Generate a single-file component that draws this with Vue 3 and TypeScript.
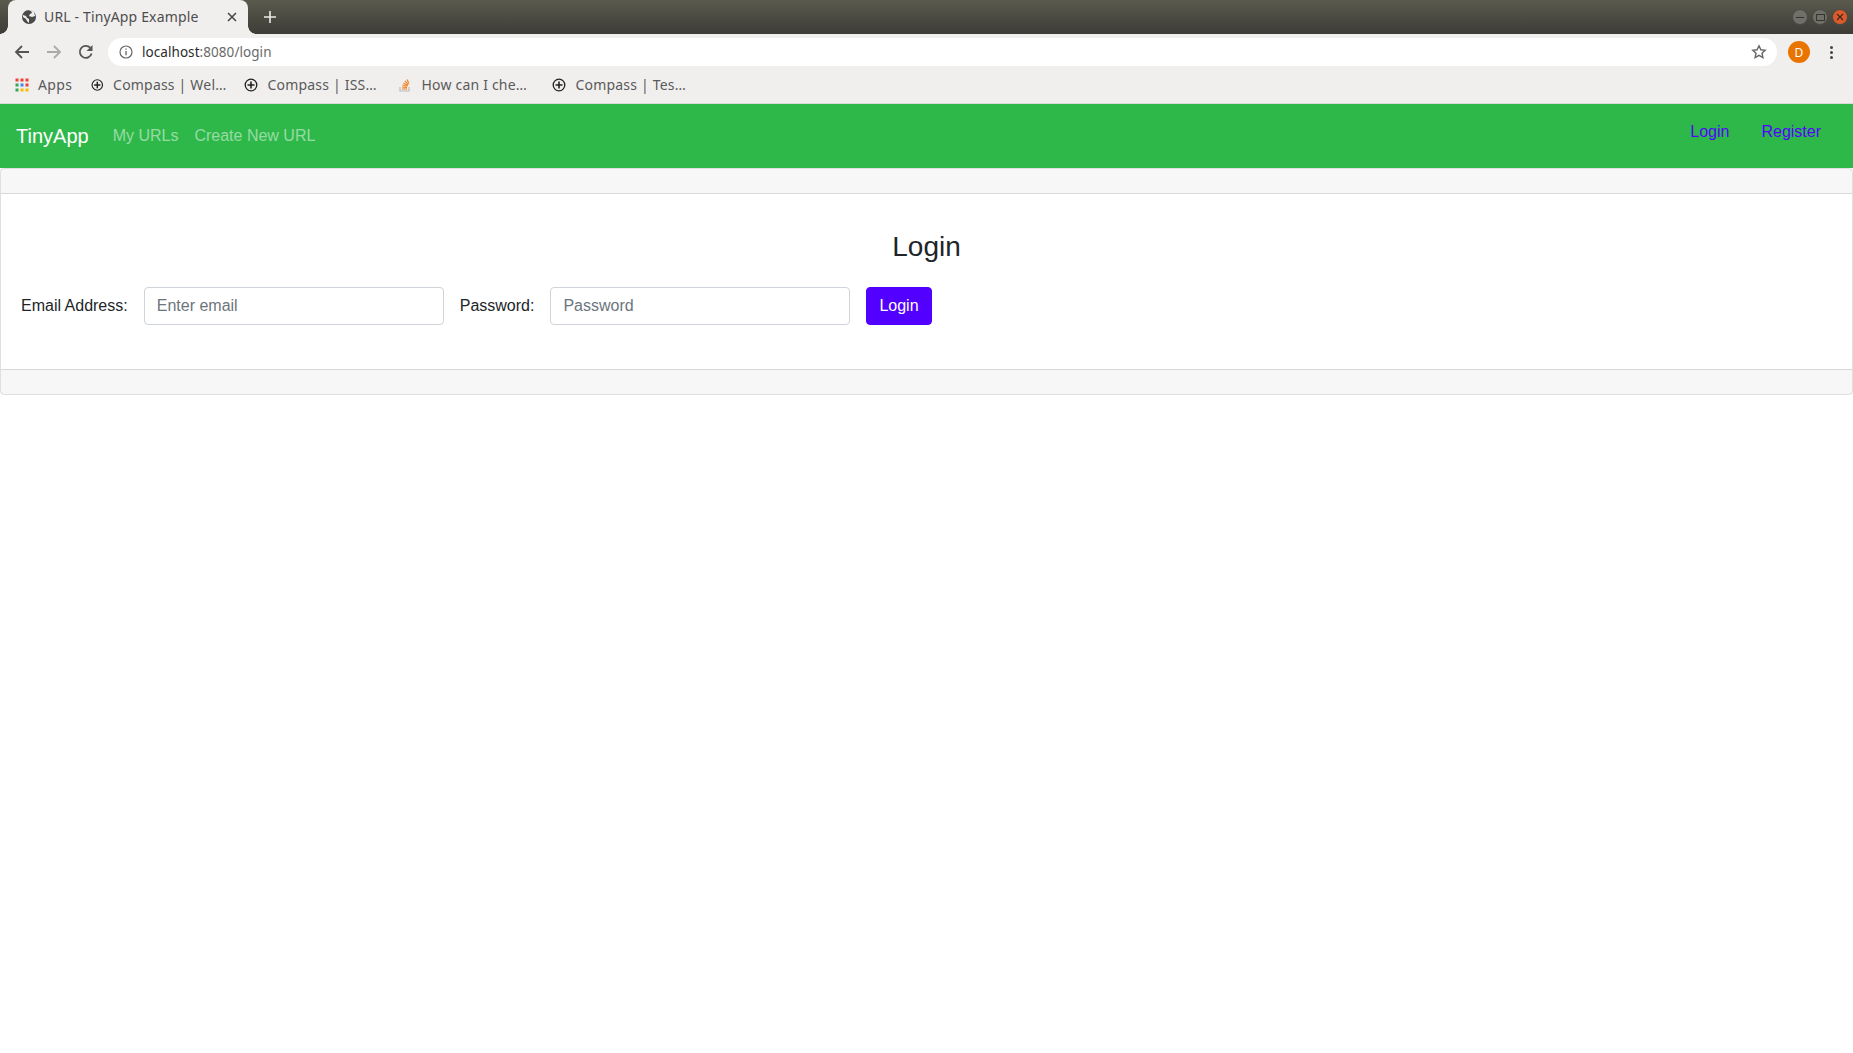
<template>
  <div class="page">
    <!-- browser chrome -->
    <div class="titlebar">
      <div class="tab">
        <svg class="favicon" viewBox="0 0 16 16" width="16" height="16">
          <circle cx="8" cy="8" r="7" fill="#4a4a4a" />
          <path d="M2 6l3 1 1 2 2 1v4l-2-2-1-2-3-2zM7 1.500l3 .5 1 2-2 1-1 2 3 1 3-1-1-4-3-2z" fill="#f1efee" />
        </svg>
        <span class="tab-title">URL - TinyApp Example</span>
        <svg class="tab-close" viewBox="0 0 10 10" width="10" height="10">
          <path d="M1 1l8 8M9 1l-8 8" stroke="#4a4a4a" stroke-width="1.600" />
        </svg>
      </div>
      <svg class="new-tab" viewBox="0 0 12 12" width="12" height="12">
        <path d="M6 0v12M0 6h12" stroke="#ecebe8" stroke-width="1.600" />
      </svg>
      <div class="window-buttons">
        <span class="win-btn"><i class="min"></i></span>
        <span class="win-btn"><i class="max"></i></span>
        <span class="win-btn close">
          <svg viewBox="0 0 8 8" width="8" height="8"><path d="M1 1l6 6M7 1l-6 6" stroke="#3a2a20" stroke-width="1.200" /></svg>
        </span>
      </div>
    </div>

    <div class="toolbar">
      <svg class="tool" viewBox="0 0 16 16" width="16" height="16">
        <path d="M15 8H2M8 2L2 8l6 6" fill="none" stroke="#555" stroke-width="1.800" />
      </svg>
      <svg class="tool" viewBox="0 0 16 16" width="16" height="16">
        <path d="M1 8h13M8 2l6 6-6 6" fill="none" stroke="#aaa" stroke-width="1.800" />
      </svg>
      <svg class="tool" viewBox="0 0 16 16" width="16" height="16">
        <path d="M13.600 9.500A6 6 0 1 1 12.200 3.700" fill="none" stroke="#555" stroke-width="1.800" />
        <path d="M14.500 1v6h-6z" fill="#555" />
      </svg>
      <div class="omnibox">
        <svg viewBox="0 0 14 14" width="14" height="14">
          <circle cx="7" cy="7" r="6" fill="none" stroke="#666" stroke-width="1.200" />
          <path d="M7 6v4.200M7 3.400v1.400" stroke="#666" stroke-width="1.300" />
        </svg>
        <span class="url"><b>localhost</b>:8080/login</span>
        <svg class="star" viewBox="0 0 16 16" width="16" height="16">
          <path d="M8 1.800l1.900 4 4.300.5-3.200 3 .9 4.300L8 11.400l-3.900 2.200.9-4.300-3.200-3 4.300-.5z" fill="none" stroke="#666" stroke-width="1.400" />
        </svg>
      </div>
      <span class="avatar">D</span>
      <span class="dots"><i></i><i></i><i></i></span>
    </div>

    <div class="bookmarks">
      <div class="bookmark apps">
        <svg viewBox="0 0 14 14" width="14" height="14">
          <rect v-for="cell in appCells" :key="cell.x + '-' + cell.y" :x="cell.x" :y="cell.y" width="3" height="3" :fill="cell.color" />
        </svg>
        <span>Apps</span>
      </div>
      <div v-for="item in bookmarks" :key="item.label" class="bookmark" :style="{ width: item.width + 'px' }">
        <svg v-if="item.kind === 'globe'" viewBox="0 0 14 14" width="14" height="14">
          <circle cx="7" cy="7" r="5.800" fill="none" stroke="#222" stroke-width="1.300" />
          <path d="M7 3.500v7M3.500 7h7" stroke="#222" stroke-width="1.600" />
        </svg>
        <svg v-else viewBox="0 0 14 14" width="14" height="14">
          <path d="M2 9v4h9V9" fill="none" stroke="#bcbbb8" stroke-width="1.200" />
          <path d="M4 11h5M4 9l5 .6M4.400 7l5 1.200M5.400 5l4.400 2.400M7 3l3.400 3.600M9 1.500l2 4" stroke="#f48024" stroke-width="1.100" />
        </svg>
        <span>{{ item.label }}</span>
      </div>
    </div>

    <!-- page content -->
    <nav class="navbar">
      <a class="brand">TinyApp</a>
      <a class="nav-link">My URLs</a>
      <a class="nav-link">Create New URL</a>
      <div class="nav-right">
        <a class="auth-link">Login</a>
        <a class="auth-link">Register</a>
      </div>
    </nav>

    <div class="card">
      <div class="card-header"></div>
      <div class="card-body">
        <h3>Login</h3>
        <form class="login-form" @submit.prevent>
          <label for="email">Email Address:</label>
          <input id="email" type="email" placeholder="Enter email" />
          <label for="password">Password:</label>
          <input id="password" type="password" placeholder="Password" />
          <button type="submit">Login</button>
        </form>
      </div>
      <div class="card-footer"></div>
    </div>
  </div>
</template>

<script setup lang="ts">
const appColors = ['#ea4335', '#ea4335', '#ea4335', '#34a853', '#4285f4', '#ea4335', '#34a853', '#fbbc05', '#fbbc05']

const appCells = appColors.map((color, i) => ({
  x: (i % 3) * 5 + 0.5,
  y: Math.floor(i / 3) * 5 + 0.5,
  color,
}))

const bookmarks = [
  { label: 'Compass | Wel…', kind: 'globe', width: 135 },
  { label: 'Compass | ISS…', kind: 'globe', width: 136 },
  { label: 'How can I che…', kind: 'stack', width: 136 },
  { label: 'Compass | Tes…', kind: 'globe', width: 135 },
]
</script>

<style>
html,
body {
  margin: 0;
  background: #fff;
}
</style>

<style scoped>
.page {
  min-height: 1053px;
  font-family: "Liberation Sans", Arial, sans-serif;
  font-size: 16px;
  color: #212529;
  overflow: hidden;
}

.titlebar {
  height: 34px;
  display: flex;
  align-items: flex-end;
  padding-left: 8px;
  background: linear-gradient(#5a5a4e, #3d3c36);
}

.tab {
  position: relative;
  width: 240px;
  height: 34px;
  box-sizing: border-box;
  padding: 0 11px 1px 13px;
  display: flex;
  align-items: center;
  background: #f1efee;
  border-radius: 8px 8px 0 0;
  font-family: "Noto Sans", sans-serif;
  font-size: 14px;
  letter-spacing: 0.15px;
  color: #4d4d4d;
}

/* outward curves at the foot of the active tab */
.tab::before,
.tab::after {
  content: "";
  position: absolute;
  bottom: 0;
  width: 8px;
  height: 8px;
}

.tab::before {
  left: -8px;
  background: radial-gradient(circle at 0 0, transparent 7.500px, #f1efee 8px);
}

.tab::after {
  right: -8px;
  background: radial-gradient(circle at 100% 0, transparent 7.500px, #f1efee 8px);
}

.tab-title {
  margin-left: 7px;
  flex: 1;
}

.new-tab {
  margin: 0 0 11px 16px;
}

.window-buttons {
  margin-left: auto;
  align-self: center;
  display: flex;
  gap: 4px;
  padding-right: 5px;
}

.win-btn {
  width: 16px;
  height: 16px;
  box-sizing: border-box;
  border-radius: 50%;
  display: flex;
  align-items: center;
  justify-content: center;
  background: #6f6e67;
  border: 1px solid #4a4a44;
}

.win-btn.close {
  background: #df5a2a;
}

.win-btn .min {
  width: 8px;
  height: 1px;
  background: #35342f;
}

.win-btn .max {
  width: 7px;
  height: 5px;
  border: 1px solid #35342f;
}

.toolbar {
  height: 32px;
  display: flex;
  align-items: center;
  padding: 2px 5px 0 14px;
  box-sizing: content-box;
  background: #f1efee;
}

.tool {
  margin-right: 16px;
}

.tool:nth-child(3) {
  margin-right: 14px;
}

.omnibox {
  flex: 1;
  height: 28px;
  margin-right: 11px;
  padding: 0 10px 0 11px;
  display: flex;
  align-items: center;
  border-radius: 14px;
  background: #fff;
}

.url {
  margin-left: 9px;
  flex: 1;
  font-family: "Noto Sans", sans-serif;
  font-size: 13.500px;
  letter-spacing: 0.06px;
  color: #6a6a6a;
}

.url b {
  font-weight: 400;
  color: #2c2c2c;
}

.avatar {
  width: 22px;
  height: 22px;
  border-radius: 50%;
  display: flex;
  align-items: center;
  justify-content: center;
  background: #e97500;
  color: #fff;
  font-family: "Noto Sans", sans-serif;
  font-size: 12px;
}

.dots {
  width: 33px;
  display: flex;
  flex-direction: column;
  align-items: center;
  gap: 2px;
  margin-left: 5px;
}

.dots i {
  width: 3px;
  height: 3px;
  border-radius: 50%;
  background: #444;
}

.bookmarks {
  height: 33px;
  padding: 0 0 2px 15px;
  display: flex;
  align-items: center;
  gap: 18px;
  background: #f1efee;
  border-bottom: 1px solid #dcdad8;
  font-family: "Noto Sans", sans-serif;
  font-size: 14px;
  letter-spacing: 0.2px;
  color: #5a5a5a;
}

.bookmark {
  display: flex;
  align-items: center;
  gap: 9px;
  white-space: nowrap;
}

.bookmark.apps {
  padding-right: 1px;
  letter-spacing: 0.4px;
}

.navbar {
  height: 64px;
  display: flex;
  align-items: center;
  padding: 0 16px;
  background: #2eb849;
}

.brand {
  margin-right: 16px;
  font-size: 20px;
  color: #fff;
}

.nav-link {
  padding: 0 8px;
  color: rgba(255, 255, 255, 0.5);
}

.nav-right {
  margin-left: auto;
  display: flex;
  margin-top: -8px;
}

.auth-link {
  padding: 0 16px;
  color: #5200ff;
}

.card {
  border: 1px solid rgba(0, 0, 0, 0.125);
  border-radius: 4px;
}

.card-header {
  height: 24px;
  background: rgba(0, 0, 0, 0.03);
  border-bottom: 1px solid rgba(0, 0, 0, 0.125);
}

.card-body {
  padding: 36px 20px 44px;
}

.card-footer {
  height: 24px;
  background: rgba(0, 0, 0, 0.03);
  border-top: 1px solid rgba(0, 0, 0, 0.125);
}

h3 {
  margin: 0 0 23.400px;
  font-size: 28px;
  font-weight: 500;
  line-height: 1.2;
  text-align: center;
}

.login-form {
  display: flex;
  align-items: center;
  gap: 16px;
}

input {
  width: 300px;
  height: 38px;
  box-sizing: border-box;
  padding: 6px 12px;
  border: 1px solid #ced4da;
  border-radius: 4px;
  font: inherit;
  color: #495057;
  outline: none;
}

input::placeholder {
  color: #6c757d;
  opacity: 1;
}

button {
  height: 38px;
  padding: 6px 12px;
  border: 1px solid #5200ff;
  border-radius: 4px;
  background: #5200ff;
  color: #fff;
  font: inherit;
}
</style>
